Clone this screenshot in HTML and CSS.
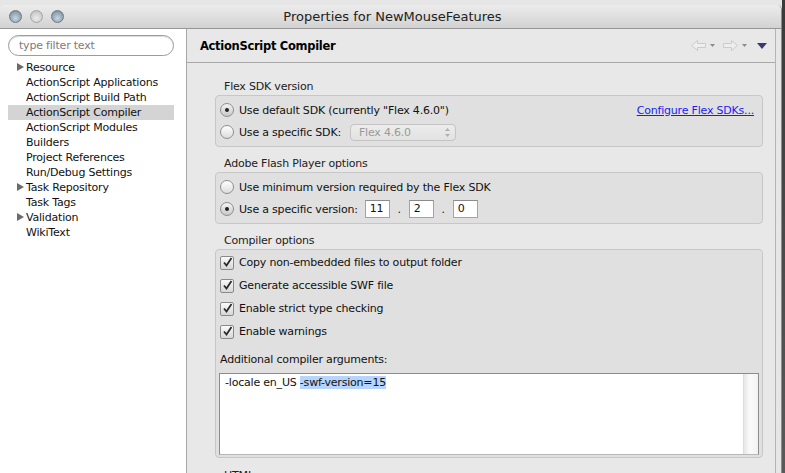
FILE: index.html
```html
<!DOCTYPE html>
<html>
<head>
<meta charset="utf-8">
<link rel="stylesheet" href="styles.css">
</head>
<body>
<div class="screen">
  <div class="window">
    <div class="titlebar">
      <div class="lights">
        <span class="light"></span><span class="light"></span><span class="light"></span>
      </div>
      <div class="title">Properties for NewMouseFeatures</div>
    </div>
    <div class="body">
      <aside class="sidebar">
        <div class="filter">type filter text</div>
        <ul class="tree">
          <li class="node"><span class="twisty"></span>Resource</li>
          <li>ActionScript Applications</li>
          <li>ActionScript Build Path</li>
          <li class="selected">ActionScript Compiler</li>
          <li>ActionScript Modules</li>
          <li>Builders</li>
          <li>Project References</li>
          <li>Run/Debug Settings</li>
          <li class="node"><span class="twisty"></span>Task Repository</li>
          <li>Task Tags</li>
          <li class="node"><span class="twisty"></span>Validation</li>
          <li>WikiText</li>
        </ul>
      </aside>
      <main class="main">
        <header class="page-header">
          <h1 class="page-title">ActionScript Compiler</h1>
          <div class="nav">
            <svg class="arrow" width="15" height="11" viewBox="0 0 15 11"><polygon points="0.5,5.5 6.5,0.5 6.5,3.5 14.5,3.5 14.5,7.5 6.5,7.5 6.5,10.5" fill="#eeeeee" stroke="#cbcbcb"/></svg>
            <svg class="drop" width="5" height="3" viewBox="0 0 5 3"><polygon points="0,0 5,0 2.5,3" fill="#8a8a8a"/></svg>
            <svg class="arrow" width="15" height="11" viewBox="0 0 15 11"><polygon points="14.5,5.5 8.5,0.5 8.5,3.5 0.5,3.5 0.5,7.5 8.5,7.5 8.5,10.5" fill="#eeeeee" stroke="#cbcbcb"/></svg>
            <svg class="drop" width="5" height="3" viewBox="0 0 5 3"><polygon points="0,0 5,0 2.5,3" fill="#8a8a8a"/></svg>
            <svg class="menu" width="10" height="6" viewBox="0 0 10 6"><polygon points="0,0 10,0 5,6" fill="#3b3a6e"/></svg>
          </div>
        </header>
        <div class="content">
          <div class="group-label">Flex SDK version</div>
          <div class="group">
            <div class="row">
              <span class="radio checked"></span>
              <span class="label">Use default SDK (currently "Flex 4.6.0")</span>
              <a class="link">Configure Flex SDKs...</a>
            </div>
            <div class="row">
              <span class="radio"></span>
              <span class="label">Use a specific SDK:</span>
              <span class="combo"><span>Flex 4.6.0</span><span class="updown"><svg width="5" height="9" viewBox="0 0 5 9"><polygon points="2.5,0 5,3 0,3" fill="#b0b0b0"/><polygon points="0,6 5,6 2.5,9" fill="#b0b0b0"/></svg></span></span>
            </div>
          </div>

          <div class="group-label">Adobe Flash Player options</div>
          <div class="group">
            <div class="row">
              <span class="radio"></span>
              <span class="label">Use minimum version required by the Flex SDK</span>
            </div>
            <div class="row">
              <span class="radio checked"></span>
              <span class="label">Use a specific version:</span>
              <span class="field first">11</span><span class="dot">.</span><span class="field">2</span><span class="dot">.</span><span class="field">0</span>
            </div>
          </div>

          <div class="group-label">Compiler options</div>
          <div class="group compiler">
            <div class="row check-row"><span class="check"><svg width="11" height="11" viewBox="0 0 11 11"><path d="M2 5.5 L4.5 8.5 L9.5 1" fill="none" stroke="#2a2a2a" stroke-width="1.8"/></svg></span><span class="label">Copy non-embedded files to output folder</span></div>
            <div class="row check-row"><span class="check"><svg width="11" height="11" viewBox="0 0 11 11"><path d="M2 5.5 L4.5 8.5 L9.5 1" fill="none" stroke="#2a2a2a" stroke-width="1.8"/></svg></span><span class="label">Generate accessible SWF file</span></div>
            <div class="row check-row"><span class="check"><svg width="11" height="11" viewBox="0 0 11 11"><path d="M2 5.5 L4.5 8.5 L9.5 1" fill="none" stroke="#2a2a2a" stroke-width="1.8"/></svg></span><span class="label">Enable strict type checking</span></div>
            <div class="row check-row"><span class="check"><svg width="11" height="11" viewBox="0 0 11 11"><path d="M2 5.5 L4.5 8.5 L9.5 1" fill="none" stroke="#2a2a2a" stroke-width="1.8"/></svg></span><span class="label">Enable warnings</span></div>
            <div class="args-label">Additional compiler arguments:</div>
            <div class="textarea">
              <div class="text">-locale en_US <span class="sel">-swf-version=15</span></div>
              <div class="vscroll"></div>
            </div>
          </div>
          <div class="group-label">HTML wrapper</div>
        </div>
      </main>
    </div>
  </div>
  <div class="outside"></div>
</div>
</body>
</html>
```
FILE: styles.css
```css
* { box-sizing: border-box; }
html, body { margin: 0; padding: 0; }
body {
  width: 785px;
  height: 473px;
  overflow: hidden;
  background: #e6e6e6;
  font-family: "DejaVu Sans", "Lucida Grande", sans-serif;
  font-size: 11px;
  letter-spacing: -0.2px;
  color: #111;
}
.screen { display: flex; height: 473px; }
.window {
  width: 782px;
  margin-top: 5px;
  height: 468px;
  display: flex;
  flex-direction: column;
  border-radius: 5px 5px 0 0;
  overflow: hidden;
  border-right: 1px solid #8c8c8c;
}
.outside {
  flex: 1;
  background: linear-gradient(#3a3a3a, #5a5a5a);
}
.titlebar {
  height: 24px;
  background: linear-gradient(#ececec, #d2d2d2);
  border-bottom: 1px solid #979797;
  display: flex;
  align-items: center;
  position: relative;
}
.lights { display: flex; gap: 8px; padding-left: 9px; }
.light {
  width: 13px; height: 13px; border-radius: 50%;
  background: radial-gradient(circle at 50% 65%, #c9d6e0 0%, #97a8b6 55%, #6f8090 100%);
  border: 1px solid #6c7a86;
}
.light:nth-child(2) {
  background: radial-gradient(circle at 50% 65%, #ececec 0%, #cfcfcf 60%, #b4b4b4 100%);
  border-color: #a4a4a4;
}
.title {
  position: absolute; left: 0; right: 0; top: 0; bottom: 0;
  display: flex; align-items: center; justify-content: center;
  font-size: 13px; color: #222; padding-left: 4px; letter-spacing: 0;
}
.body { flex: 1; display: flex; min-height: 0; }
.sidebar {
  width: 187px;
  background: #fff;
  border-right: 1px solid #a6a6a6;
  padding: 6px 0 0 0;
}
.filter {
  margin-left: 8px;
  width: 166px;
  height: 21px;
  border: 1px solid #9c9c9c;
  border-radius: 11px;
  box-shadow: inset 0 1px 1px rgba(0,0,0,0.15);
  color: #7c7c7c;
  padding-left: 10px;
  line-height: 19px;
}
.tree { list-style: none; margin: 4px 0 0 0; padding: 0; }
.tree li {
  height: 15px;
  line-height: 15px;
  margin-left: 8px;
  width: 166px;
  padding-left: 18px;
  position: relative;
  white-space: nowrap;
}
.tree li.selected { background: #d4d4d4; }
.twisty {
  position: absolute;
  left: 9px; top: 3px;
  width: 0; height: 0;
  border-left: 7px solid #6b6b6b;
  border-top: 4.5px solid transparent;
  border-bottom: 4.5px solid transparent;
}
.main {
  flex: 1;
  background: #e8e8e8;
  display: flex;
  flex-direction: column;
  min-width: 0;
  overflow: hidden;
  border-right: 1px solid #b4b4b4;
  margin-right: 5px;
}
.page-header {
  height: 34px;
  flex: none;
  border-bottom: 1px solid #a8a8a8;
  display: flex;
  align-items: center;
  justify-content: space-between;
  padding: 0 8px 0 13px;
}
.page-title { font-size: 11.5px; letter-spacing: -0.3px; font-weight: bold; margin: 0; color: #000; }
.nav { display: flex; align-items: center; gap: 4px; }
.nav .drop { margin-right: 4px; }
.nav .menu { margin-left: 2px; }
.content { padding: 17px 12px 0 28px; }
.group-label { height: 14px; line-height: 14px; padding-left: 9px; color: #222; }
.group {
  background: #e0e0e0;
  border: 1px solid #c7c7c7;
  border-radius: 4px;
  padding: 3px 0 3px 4px;
  margin-top: 1px;
  margin-bottom: 10px;
}
.row { height: 22px; display: flex; align-items: center; }
.label { margin-left: 5px; white-space: nowrap; }
.radio {
  width: 14px; height: 14px; border-radius: 50%;
  border: 1px solid #8e8e8e;
  background: linear-gradient(#ffffff, #dcdcdc);
  position: relative;
  flex: none;
}
.radio.checked { background: linear-gradient(#f4f4f4, #c8c8c8); }
.radio.checked::after {
  content: ""; position: absolute; left: 4px; top: 4px;
  width: 4px; height: 4px; border-radius: 50%; background: #222;
}
.link {
  margin-left: auto; margin-right: 8px;
  color: #1b1bf0; text-decoration: underline; white-space: nowrap;
}
.combo {
  margin-left: 9px;
  width: 106px; height: 17px;
  border: 1px solid #c4c4c4;
  border-radius: 4px;
  background: linear-gradient(#ececec, #e2e2e2);
  color: #9a9a9a;
  display: flex; align-items: center; justify-content: space-between;
  padding: 0 5px 0 8px;
  font-size: 11px;
}
.updown { display: flex; }
.field {
  width: 25px; height: 18px;
  background: #fff;
  border: 1px solid #a3a3a3;
  border-top-color: #8a8a8a;
  padding-left: 4px;
  line-height: 16px;
}
.field.first { margin-left: 7px; }
.dot { width: 19px; text-align: center; }
.compiler { padding-top: 1px; padding-bottom: 2px; margin-bottom: 11px; }
.check-row { height: 23px; }
.check {
  width: 14px; height: 14px;
  border: 1px solid #8a8a8a;
  border-radius: 2px;
  background: linear-gradient(#fafafa, #d6d6d6);
  display: flex; align-items: center; justify-content: center;
  flex: none;
}
.args-label { margin-top: 10px; height: 14px; line-height: 14px; padding-left: 0; }
.textarea {
  margin: 6px 3px 0 -1px;
  height: 82px;
  background: #fff;
  border: 1px solid #8c8c8c;
  border-bottom-color: #b8b8b8;
  display: flex;
  justify-content: space-between;
}
.text { padding: 2px 0 0 5px; white-space: nowrap; line-height: 14px; }
.sel { background: #b5d5ff; }
.vscroll {
  width: 15px;
  background: linear-gradient(90deg, #e6e6e6, #fafafa 40%, #f2f2f2);
  border-left: 1px solid #dcdcdc;
}
```
